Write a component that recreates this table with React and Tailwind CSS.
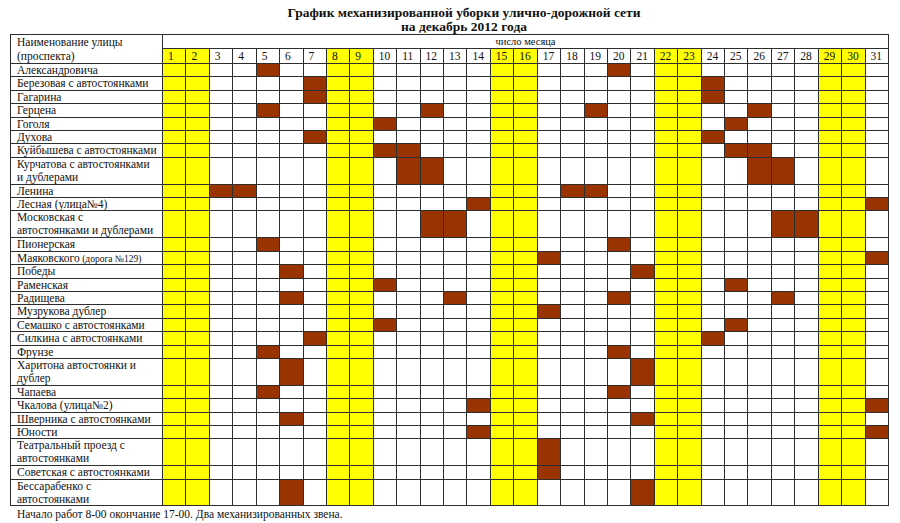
const weekend = [1, 2, 8, 9, 15, 16, 22, 23, 29, 30];
const days = Array.from({ length: 31 }, (_, i) => i + 1);

// name, brown days, two-line row
const rows = [
  ["Александровича", [5, 20]],
  ["Березовая с автостоянками", [7, 24]],
  ["Гагарина", [7, 24]],
  ["Герцена", [5, 12, 19, 26]],
  ["Гоголя", [10, 25]],
  ["Духова", [7, 24]],
  ["Куйбышева с автостоянками", [10, 11, 25, 26]],
  ["Курчатова с автостоянками\nи дублерами", [11, 12, 26, 27], true],
  ["Ленина", [3, 4, 18, 19]],
  ["Лесная (улица№4)", [14, 31]],
  ["Московская с\nавтостоянками и дублерами", [12, 13, 27, 28], true],
  ["Пионерская", [5, 20]],
  ["Маяковского", [17, 31], false, "(дорога №129)"],
  ["Победы", [6, 21]],
  ["Раменская", [10, 25]],
  ["Радищева", [6, 13, 20, 27]],
  ["Музрукова дублер", [17]],
  ["Семашко с автостоянками", [10, 25]],
  ["Силкина с автостоянками", [7, 24]],
  ["Фрунзе", [5, 20]],
  ["Харитона автостоянки и\nдублер", [6, 21], true],
  ["Чапаева", [5, 20]],
  ["Чкалова (улица№2)", [14, 31]],
  ["Шверника с автостоянками", [6, 21]],
  ["Юности", [14, 31]],
  ["Театральный проезд с\nавтостоянками", [17], true],
  ["Советская с автостоянками", [17]],
  ["Бессарабенко с\nавтостоянками", [6, 21], true],
];

function dayBg(d, marked) {
  if (marked.includes(d)) return "bg-[#993300]";
  if (weekend.includes(d)) return "bg-[#ffff00]";
  return "bg-white";
}

function StreetRow({ name, marked, double, small }) {
  return (
    <div
      className={`grid grid-cols-[152px_repeat(31,minmax(0,1fr))] ${
        double ? "h-[26.84px]" : "h-[13.42px]"
      }`}
    >
      <div className="border-r border-b border-[#2e2e2e] pl-[6px] text-[11.5px] leading-[12.9px] whitespace-pre overflow-hidden">
        {name}
        {small && <span className="text-[9.5px]"> {small}</span>}
      </div>
      {days.map((d) => (
        <div key={d} className={`border-r border-b border-[#2e2e2e] ${dayBg(d, marked)}`} />
      ))}
    </div>
  );
}

export default function App() {
  return (
    <div className="w-[900px] h-[523px] bg-white text-[#111] font-['Liberation_Serif',serif] overflow-hidden">
      {/* title */}
      <div className="pt-[6px] pl-[28px] text-center font-bold text-[13.5px] leading-[14px]">
        <div>График механизированной уборки улично-дорожной сети</div>
        <div>на декабрь 2012 года</div>
      </div>

      <div className="ml-[10px] mt-[0px] w-[879px] border-t border-l border-[#2e2e2e]">
        {/* header */}
        <div className="grid grid-cols-[152px_repeat(31,minmax(0,1fr))] grid-rows-[14px_15px]">
          <div className="row-span-2 border-r border-b border-[#2e2e2e] pl-[6px] pt-[1px] text-[11.5px] leading-[13.5px]">
            Наименование улицы
            <br />
            (проспекта)
          </div>
          <div className="col-span-31 border-r border-b border-[#2e2e2e] text-center text-[10.5px] leading-[13px]">
            число месяца
          </div>
          {days.map((d) => (
            <div
              key={d}
              className={`border-r border-b border-[#2e2e2e] pl-[5px] text-[11.5px] leading-[14px] ${
                weekend.includes(d) ? "bg-[#ffff00]" : "bg-white"
              }`}
            >
              {d}
            </div>
          ))}
        </div>

        {rows.map(([name, marked, double, small]) => (
          <StreetRow key={name} name={name} marked={marked} double={double} small={small} />
        ))}
      </div>

      <div className="pl-[17px] pt-[1px] text-[11.5px] leading-[14px]">
        Начало работ 8-00 окончание 17-00. Два механизированных звена.
      </div>
    </div>
  );
}
